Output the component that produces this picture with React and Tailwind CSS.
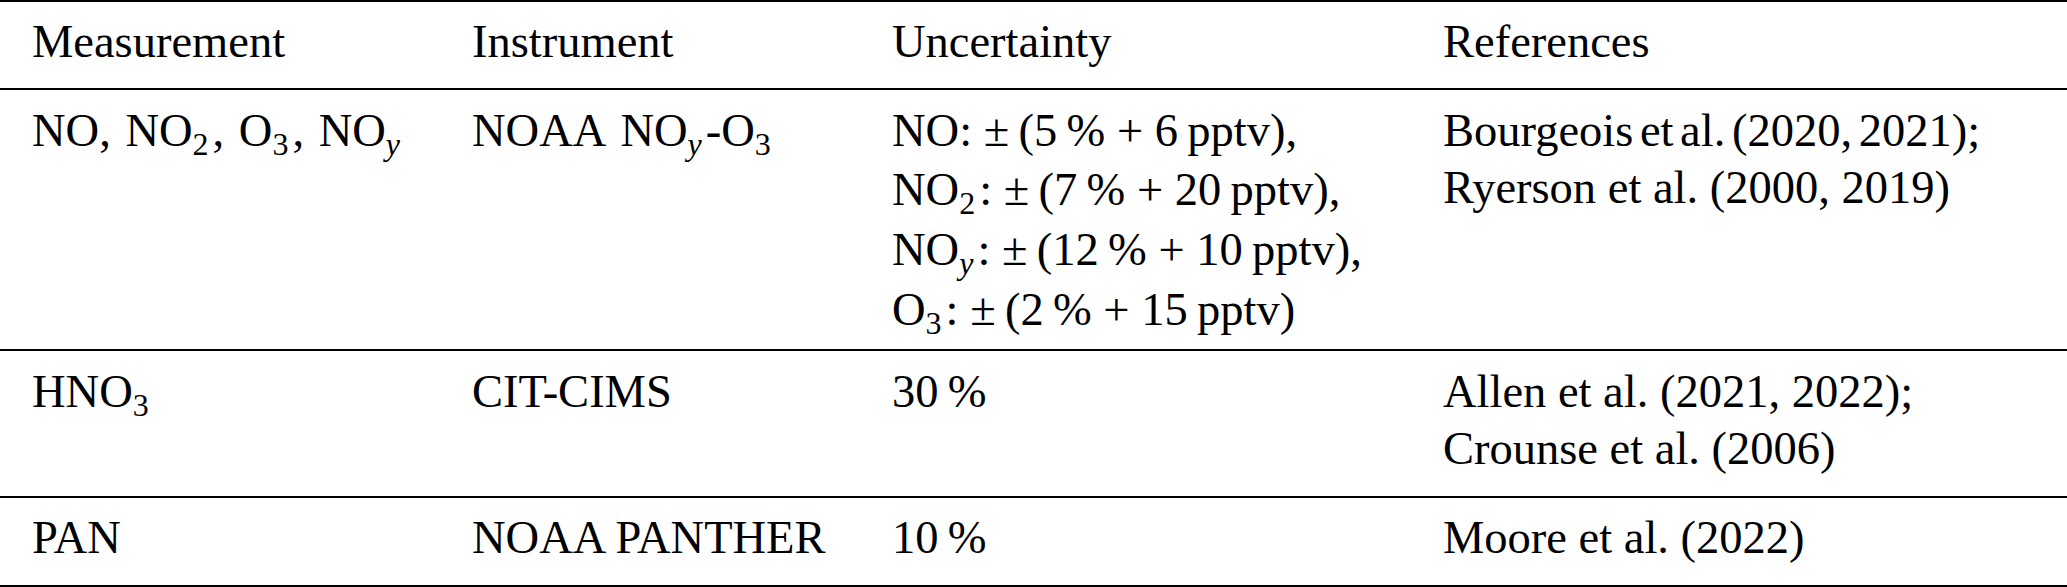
import React from "react";

const Sub = ({ children, italic }) => (
  <sub className={"text-[32px] bottom-[-9px] pr-[4px] " + (italic ? "italic" : "")}>{children}</sub>
);

const Rule = () => <div className="h-[2px] bg-black" />;

const Row = ({ h, pt, cells }) => (
  <div className={"grid grid-cols-[440px_420px_551px_1fr] pl-[32px] " + h + " " + pt}>
    {cells.map((c, i) => (
      <div key={i} className="whitespace-nowrap">{c}</div>
    ))}
  </div>
);

export default function App() {
  return (
    <div
      className="w-[2067px] h-[587px] bg-white text-black text-[46.5px] leading-[57px]"
      style={{ fontFamily: '"Liberation Serif", "Times New Roman", serif' }}
    >
      <Rule />
      <Row
        h="h-[86px]"
        pt="pt-[11px]"
        cells={["Measurement", "Instrument", "Uncertainty", "References"]}
      />
      <Rule />
      <Row
        h="h-[259px]"
        pt="pt-[12px]"
        cells={[
          <span className="[word-spacing:3px]">
            NO, NO<Sub>2</Sub>, O<Sub>3</Sub>, NO<Sub italic>y</Sub>
          </span>,
          <span className="[word-spacing:5px]">
            NOAA NO<Sub italic>y</Sub>-O<Sub>3</Sub>
          </span>,
          <div>
            <div>NO: ±&#8201;(5&#8201;% + 6&#8201;pptv),</div>
            <div className="mt-[2px]">
              NO<Sub>2</Sub>: ±&#8201;(7&#8201;% + 20&#8201;pptv),
            </div>
            <div className="mt-[3px]">
              NO<Sub italic>y</Sub>: ±&#8201;(12&#8201;% + 10&#8201;pptv),
            </div>
            <div className="mt-[3px]">
              O<Sub>3</Sub>: ±&#8201;(2&#8201;% + 15&#8201;pptv)
            </div>
          </div>,
          <div>
            <div className="[word-spacing:-5px]">Bourgeois et al. (2020, 2021);</div>
            <div>Ryerson et al. (2000, 2019)</div>
          </div>,
        ]}
      />
      <Rule />
      <Row
        h="h-[145px]"
        pt="pt-[12px]"
        cells={[
          <span>
            HNO<Sub>3</Sub>
          </span>,
          "CIT-CIMS",
          "30\u2009%",
          <div>
            <div>Allen et al. (2021, 2022);</div>
            <div>Crounse et al. (2006)</div>
          </div>,
        ]}
      />
      <Rule />
      <Row
        h="h-[87px]"
        pt="pt-[11px]"
        cells={["PAN", "NOAA PANTHER", "10\u2009%", "Moore et al. (2022)"]}
      />
      <Rule />
    </div>
  );
}
